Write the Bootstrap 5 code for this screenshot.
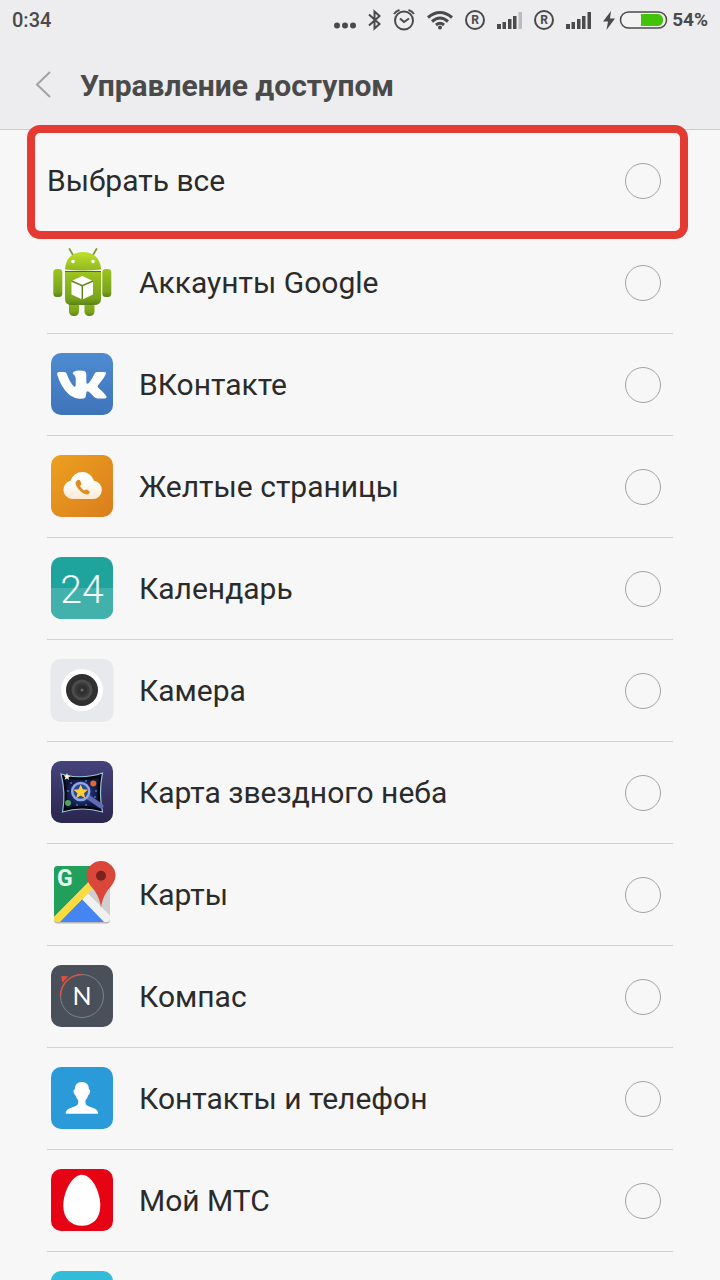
<!DOCTYPE html>
<html lang="ru">
<head>
<meta charset="utf-8">
<meta name="viewport" content="width=device-width, initial-scale=1">
<title>Управление доступом</title>
<link href="https://cdn.jsdelivr.net/npm/bootstrap@5.3.0/dist/css/bootstrap.min.css" rel="stylesheet">
<style>
  body { font-family: Roboto, "Noto Sans", sans-serif; background: #f7f7f7; color: #2b2b2b; }
  .app-head { background: #ededef; color: #4a4a4a; border-bottom: 1px solid #cbcbcd; }
  .status { height: 40px; padding: 0 12px; font-size: 20px; line-height: 40px; font-weight: 500; }
  .status svg { display: block; flex: none; }
  .status-icons { gap: 12px; }
  .battery-level { font-size: 19px; font-weight: 700; }
  .titlebar { height: 89px; padding: 2px 32px 0 28px; gap: 22px; }
  .titlebar h1 { font-size: 30px; line-height: 36px; font-weight: 700; }
  .back { width: 30px; height: 40px; background: none; }
  .apps { padding: 0 47px; }
  .app-row { min-height: 102px; border-bottom: 1px solid #d2d2d2; padding-right: 12px; }
  .app-row label { font-size: 30px; line-height: 40px; }
  .app-row > svg { flex: none; margin-right: 22px; }
  .app-row .form-check-input { width: 36px; height: 36px; border: 1px solid #a2a2a2; border-radius: 50%; background-color: transparent; }
  .app-row .form-check-input:checked { background-color: #43c20a; }
  .highlight { position: absolute; top: -5px; right: -15px; bottom: -8px; left: -20px; border: 8px solid #e43a31; border-radius: 13px; pointer-events: none; }
  .compass-letter { font-family: Lato, sans-serif; }
</style>
</head>
<body class="vh-100 overflow-hidden">

<header class="app-head">
  <div class="status d-flex justify-content-between align-items-center">
    <span>0:34</span>
    <div class="status-icons d-flex align-items-center">
      <svg width="22" height="26" fill="#4a4a4a"><circle cx="3" cy="18.500" r="3"/><circle cx="11" cy="18.500" r="3"/><circle cx="19" cy="18.500" r="3"/></svg>
      <svg width="13" height="26" fill="none" stroke="#4a4a4a" stroke-width="2"><path d="M1 7.500 11.500 17 6.500 21.500V4.500L11.500 9 1 18.500"/></svg>
      <svg width="22" height="26" fill="none" stroke="#4a4a4a" stroke-width="2"><circle cx="11" cy="13.500" r="9"/><path d="M7 11.500 11 15l5-3.500M1 7Q3 4 6.500 3M21 7Q19 4 15.500 3"/></svg>
      <svg width="26" height="26" fill="none" stroke="#4a4a4a" stroke-width="3"><path d="M1 10.500Q13 .5 25 10.500M5 14.500Q13 7.500 21 14.500M9 18Q13 14.500 17 18"/><circle cx="13" cy="20.500" r="2" fill="#4a4a4a" stroke="none"/></svg>
      <svg width="20" height="26"><circle cx="10" cy="13" r="9" fill="none" stroke="#4a4a4a" stroke-width="2"/><text x="10" y="17" font-size="12" font-weight="700" fill="#4a4a4a" text-anchor="middle">R</text></svg>
      <svg width="25" height="26" fill="#4a4a4a"><path d="M0 17h4v5H0zM5.500 15h3.500v7H5.500zM11 12h3.500v10H11zM16 9h3.500v13H16z"/><path fill="#bcbcbe" d="M21.500 5H25v17h-3.500z"/></svg>
      <svg width="20" height="26"><circle cx="10" cy="13" r="9" fill="none" stroke="#4a4a4a" stroke-width="2"/><text x="10" y="17" font-size="12" font-weight="700" fill="#4a4a4a" text-anchor="middle">R</text></svg>
      <svg width="25" height="26" fill="#4a4a4a"><path d="M0 17h4v5H0zM5.500 15h3.500v7H5.500zM11 12h3.500v10H11zM16 9h3.500v13H16zM21.500 5H25v17h-3.500z"/></svg>
      <div class="d-flex align-items-center">
        <svg width="12" height="26" class="me-1" fill="#4a4a4a"><path d="M8 4 0 14.500h5L3.500 23 12 11.500H7z"/></svg>
        <svg width="49" height="26" class="me-1"><rect x="1.500" y="5" width="46" height="16" rx="8" fill="#f2f2f3" stroke="#4a4a4a" stroke-width="1.500"/><path d="M22 7h17.500a6.200 6.200 0 0 1 0 12H22z" fill="#43c20a"/></svg>
        <span class="battery-level">54%</span>
      </div>
    </div>
  </div>
  <div class="titlebar d-flex align-items-center">
    <button type="button" class="back border-0 p-0" aria-label="Назад"><svg width="30" height="40" class="d-block" fill="none" stroke="#a2a2a4" stroke-width="2"><path d="M22 6 9 18.500 22 31"/></svg></button>
    <h1 class="m-0">Управление доступом</h1>
  </div>
</header>

<main class="apps">
  <div class="app-row position-relative d-flex align-items-center">
    <label class="flex-fill" for="all">Выбрать все</label>
    <input class="form-check-input m-0" type="checkbox" id="all">
    <div class="highlight"></div>
  </div>

  <div class="app-row d-flex align-items-center">
    <svg width="70" height="71">
      <defs>
        <linearGradient id="gHead" x1="0" y1="0" x2="0" y2="1"><stop offset="0" stop-color="#c0df2c"/><stop offset="1" stop-color="#8fb91c"/></linearGradient>
        <linearGradient id="gBody" x1="0" y1="0" x2="0" y2="1"><stop offset="0" stop-color="#9dc41f"/><stop offset=".8" stop-color="#79a41b"/><stop offset="1" stop-color="#5c8218"/></linearGradient>
      </defs>
      <path d="M22.500 2 26 8M49.500 2 46 8" stroke="#7f9c3c" stroke-width="1.800" stroke-linecap="round"/>
      <g fill="url(#gBody)">
        <rect x="22" y="48" width="10" height="21" rx="4.500"/><rect x="37.500" y="48" width="10" height="21" rx="4.500"/>
        <rect x="6.300" y="22" width="9" height="28" rx="3.500"/><rect x="55.300" y="22" width="9" height="28" rx="3.500"/>
        <path d="M18 25h36v27q0 6-7 6H25q-7 0-7-6z"/>
      </g>
      <path d="M18 24.500h36" stroke="#4f6f17"/>
      <path d="M18 22.500C18.500 11 26 5 36 5s17.500 6 18 17.500q-18 2-36 0z" fill="url(#gHead)"/>
      <circle cx="26" cy="14.500" r="1.800" fill="#fff"/><circle cx="46" cy="14.500" r="1.800" fill="#fff"/>
      <path d="M35.300 29 46 34v13.500L35.300 52.500 24.500 47.500V34z" fill="#fff"/>
      <path d="M24.500 34l10.800 4.700L46 34M35.300 38.700v13.800" fill="none" stroke="#5f861a" stroke-width="1.500"/>
    </svg>
    <label class="flex-fill" for="a1">Аккаунты Google</label>
    <input class="form-check-input m-0" type="checkbox" id="a1">
  </div>

  <div class="app-row d-flex align-items-center">
    <svg width="70" height="71">
      <defs><linearGradient id="gVk" x1="0" y1="0" x2="0" y2="1"><stop offset="0" stop-color="#4d8bd1"/><stop offset="1" stop-color="#3f74b9"/></linearGradient></defs>
      <rect x="4" y="4" width="62" height="62" rx="10" fill="url(#gVk)"/>
      <path fill="#fff" d="M10.500 23h7q1.500 0 2.200 1.700 3.300 9 7 12.600 2 1.500 2-1.300v-7q0-2.500-2.700-4-.8-1 .5-2 3-1.800 9-1.300 3.800.2 3.800 3.300v8.500q.5 2.500 3 0 3.200-3.800 5.200-8.700.7-1.800 2.500-1.800h7q2.700 0 1.700 2.300-1.800 4.200-7.700 11-1 1.300.5 2.700 5.800 5 7.800 8.300 1 2.200-1.800 2.200h-7q-2 0-3.800-2l-4-4q-3-2.700-3.400.5-.2 4-1.300 5-1.500 1-5.500.8-11-1-17.500-13-2.700-4.500-4.800-11.300-.6-2.500 2.300-2.500z"/>
    </svg>
    <label class="flex-fill" for="a2">ВКонтакте</label>
    <input class="form-check-input m-0" type="checkbox" id="a2">
  </div>

  <div class="app-row d-flex align-items-center">
    <svg width="70" height="71">
      <defs>
        <linearGradient id="gYp" x1="0" y1="0" x2="1" y2="1"><stop offset="0" stop-color="#eda020"/><stop offset="1" stop-color="#d97e1d"/></linearGradient>
        <linearGradient id="gCl" x1="0" y1="0" x2="0" y2="1"><stop offset=".4" stop-color="#fff"/><stop offset="1" stop-color="#fbe9d2"/></linearGradient>
      </defs>
      <rect x="4" y="4" width="62" height="62" rx="10" fill="url(#gYp)"/>
      <path fill="url(#gCl)" d="M25 48a9.300 9.300 0 0 1-1.500-18.300A12.300 12.300 0 0 1 47 29.700 9.200 9.200 0 0 1 46 48z"/>
      <path fill="#e08c1e" d="M30.500 29q2-.8 2.800 1l1 2.500q.3 1.300-1.300 2.500 1.500 3 4.500 4.500 1.300-1.500 2.700-.8l2 1.300q1.300 1 0 2.500-1.700 2-5 .3-5.500-2.800-8.200-8.500-1.300-3.800 1.500-5.300z"/>
    </svg>
    <label class="flex-fill" for="a3">Желтые страницы</label>
    <input class="form-check-input m-0" type="checkbox" id="a3">
  </div>

  <div class="app-row d-flex align-items-center">
    <svg width="70" height="71">
      <rect x="4" y="4" width="62" height="62" rx="10" fill="#1fa49d"/>
      <path d="M4 35h62v21a10 10 0 0 1-10 10H14A10 10 0 0 1 4 56z" fill="#42b1ab"/>
      <text x="35" y="50" font-size="39" font-weight="300" fill="#f4fffe" text-anchor="middle">24</text>
    </svg>
    <label class="flex-fill" for="a4">Календарь</label>
    <input class="form-check-input m-0" type="checkbox" id="a4">
  </div>

  <div class="app-row d-flex align-items-center">
    <svg width="70" height="71">
      <rect x="3.500" y="4" width="63" height="63" rx="10" fill="#e8e9ed"/>
      <circle cx="35" cy="35" r="21" fill="#fff"/><circle cx="35" cy="35" r="16" fill="#303030"/>
      <circle cx="35" cy="35" r="9" fill="#393939" stroke="#4c4c4c" stroke-width="3"/><circle cx="35" cy="35" r="5" fill="#303030"/><circle cx="35" cy="35" r="1.500" fill="#686868"/>
    </svg>
    <label class="flex-fill" for="a5">Камера</label>
    <input class="form-check-input m-0" type="checkbox" id="a5">
  </div>

  <div class="app-row d-flex align-items-center">
    <svg width="70" height="71">
      <defs><linearGradient id="gSky" x1="0" y1="0" x2="0" y2="1"><stop offset="0" stop-color="#46437c"/><stop offset="1" stop-color="#29264f"/></linearGradient>
      <radialGradient id="gSp"><stop offset="0" stop-color="#2a45a5"/><stop offset="1" stop-color="#10173d"/></radialGradient></defs>
      <rect x="4" y="4" width="62" height="62" rx="10" fill="url(#gSky)"/>
      <path d="M14 17Q35 23 55.500 16 51.500 36 55.500 55 35 49 15.500 55 19 36 14 17z" fill="#05060d" stroke="#91c6e0" stroke-width="1.200"/>
      <path d="M18 21q17 4 34 0-3 15 0 30-17-4-33 0 2-15-1-30z" fill="url(#gSp)"/>
      <g fill="#7db4ee"><circle cx="24" cy="26" r=".8"/><circle cx="39" cy="24" r=".8"/><circle cx="49" cy="34" r=".8"/><circle cx="21" cy="34" r=".8"/><circle cx="30" cy="48" r=".8"/><circle cx="39" cy="48" r=".8"/><circle cx="48" cy="40" r=".8"/></g>
      <path d="m41 40 13 9" stroke="#6269b5" stroke-width="5" stroke-linecap="round"/>
      <circle cx="33.700" cy="34.500" r="8.500" fill="#27489c" stroke="#90a7df" stroke-width="2.500"/>
      <path d="m33.700 27.500 2.100 4.700 5 .5-3.800 3.500 1.200 5-4.500-2.600-4.500 2.600 1.200-5-3.800-3.500 5-.5z" fill="#ffcf2e"/>
      <circle cx="46.300" cy="26.500" r="3" fill="#e4652d"/><circle cx="21" cy="46" r="3" fill="#50a35b"/>
      <path d="m20 16 1 2.500 2.700.5-2.200 1.500.4 2.500-2-1.500-2.300 1.200.8-2.500-1.800-1.800 2.500-.2z" fill="#fff2cf"/>
    </svg>
    <label class="flex-fill" for="a6">Карта звездного неба</label>
    <input class="form-check-input m-0" type="checkbox" id="a6">
  </div>

  <div class="app-row d-flex align-items-center">
    <svg width="70" height="71">
      <defs><clipPath id="cMap"><rect x="7" y="7" width="56" height="56" rx="3.500"/></clipPath></defs>
      <rect x="7" y="8" width="56" height="56.500" rx="3.500" fill="#b8b8b8"/>
      <g clip-path="url(#cMap)">
        <path d="M7 7h56v56H7z" fill="#cfcfcf"/>
        <path d="M7 7h50L7 58z" fill="#21a05b"/>
        <path d="M35.300 40 58 63H12z" fill="#4485f3"/>
        <path d="M35.300 40.500 41 34.500 64 57.500V64h-6z" fill="#f1f1f1"/>
        <path d="M7 58 46 19v10L13 63H7z" fill="#fbdc3e"/>
      </g>
      <text x="10" y="27" font-size="23" font-weight="700" fill="#e9f5ee">G</text>
      <path d="M54 49q-.8-9-6.500-17.500-8-8.500-8-15a14.500 14.500 0 0 1 29 0q0 6.500-8 15Q54.800 40 54 49z" fill="#db463b"/>
      <circle cx="54" cy="16.700" r="5" fill="#7b221c"/>
    </svg>
    <label class="flex-fill" for="a7">Карты</label>
    <input class="form-check-input m-0" type="checkbox" id="a7">
  </div>

  <div class="app-row d-flex align-items-center">
    <svg width="70" height="71">
      <rect x="4" y="4" width="62" height="62" rx="10" fill="#4a5059"/>
      <circle cx="35" cy="35" r="21.500" fill="none" stroke="#7d8289"/>
      <path d="M13.500 35A21.500 21.500 0 0 1 35 13.500" fill="none" stroke="#e25040" stroke-width="1.500"/>
      <path d="m14.300 15 7 .3-6 6.400z" fill="#e25040"/>
      <text class="compass-letter" x="35" y="44" font-size="25" font-weight="400" fill="#fff" text-anchor="middle">N</text>
    </svg>
    <label class="flex-fill" for="a8">Компас</label>
    <input class="form-check-input m-0" type="checkbox" id="a8">
  </div>

  <div class="app-row d-flex align-items-center">
    <svg width="70" height="71">
      <rect x="4" y="4" width="62" height="62" rx="10" fill="#2a9ad8"/>
      <path fill="#fff" d="M34.800 19q7.200 0 7.200 7.500 1.800.3.800 3.500-.6 2-1.600 2.200-.7 3-2.700 5v3q.3 2 3 3l6 2.200q3.700 1.600 3.500 5.300H18.700q-.2-3.700 3.500-5.300l6-2.200q2.700-1 3-3v-3q-2-2-2.700-5-1-.2-1.600-2.200-1-3.200.8-3.500 0-7.500 7.100-7.500z"/>
    </svg>
    <label class="flex-fill" for="a9">Контакты и телефон</label>
    <input class="form-check-input m-0" type="checkbox" id="a9">
  </div>

  <div class="app-row d-flex align-items-center">
    <svg width="70" height="71">
      <rect x="4" y="4" width="62" height="62" rx="10" fill="#e60313"/>
      <path fill="#fff" d="M34.900 9.700C45 9.700 53.300 27 53.300 40.500S45.500 60.700 34.900 60.700 16.300 54 16.300 40.500 25 9.700 34.900 9.700z"/>
    </svg>
    <label class="flex-fill" for="a10">Мой МТС</label>
    <input class="form-check-input m-0" type="checkbox" id="a10">
  </div>

  <div class="app-row d-flex align-items-center">
    <svg width="70" height="71"><rect x="4" y="4" width="62" height="62" rx="10" fill="#31bdd9"/></svg>
  </div>
</main>

<script src="https://cdn.jsdelivr.net/npm/bootstrap@5.3.0/dist/js/bootstrap.bundle.min.js"></script>
</body>
</html>
